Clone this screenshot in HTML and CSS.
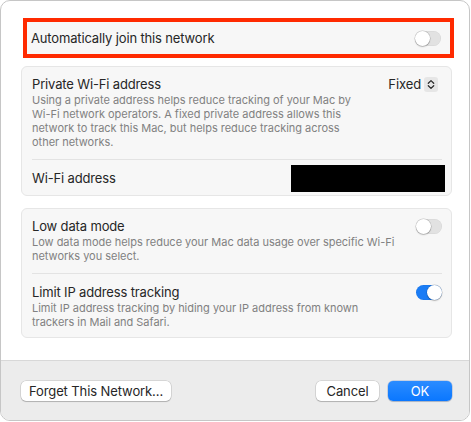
FILE: index.html
```html
<!DOCTYPE html>
<html>
<head>
<meta charset="utf-8">
<link rel="stylesheet" href="styles.css">
</head>
<body>
<div class="window">
  <div class="content">
    <div class="highlight">
      <span class="title">Automatically join this network</span>
      <span class="toggle"></span>
    </div>

    <div class="group">
      <div class="row">
        <div class="text narrow">
          <div class="title">Private Wi-Fi address</div>
          <div class="desc">Using a private address helps reduce tracking of your Mac by Wi-Fi network operators. A fixed private address allows this network to track this Mac, but helps reduce tracking across other networks.</div>
        </div>
        <div class="popup">
          <span>Fixed</span>
          <span class="stepper"><svg width="14" height="15" viewBox="0 0 14 15"><path d="M4.3 6.2 L7 3.6 L9.7 6.2 M4.3 8.8 L7 11.4 L9.7 8.8" fill="none" stroke="#2b2b2b" stroke-width="1.3" stroke-linecap="round" stroke-linejoin="round"/></svg></span>
        </div>
      </div>
      <div class="divider"></div>
      <div class="row single">
        <div class="title">Wi-Fi address</div>
        <div class="redact"></div>
      </div>
    </div>

    <div class="group group-b">
      <div class="row">
        <div class="text">
          <div class="title">Low data mode</div>
          <div class="desc">Low data mode helps reduce your Mac data usage over specific Wi-Fi networks you select.</div>
        </div>
        <span class="toggle"></span>
      </div>
      <div class="divider"></div>
      <div class="row last">
        <div class="text">
          <div class="title">Limit IP address tracking</div>
          <div class="desc">Limit IP address tracking by hiding your IP address from known trackers in Mail and Safari.</div>
        </div>
        <span class="toggle on"></span>
      </div>
    </div>
  </div>

  <div class="footer">
    <button class="btn forget">Forget This Network...</button>
    <div class="spacer"></div>
    <button class="btn cancel">Cancel</button>
    <button class="btn primary">OK</button>
  </div>
</div>
</body>
</html>
```

FILE: styles.css
```css
* { box-sizing: border-box; }
html, body { margin: 0; padding: 0; background: #ffffff; }
body {
  font-family: Inter, "Noto Sans", sans-serif;
  color: #262626;
  -webkit-font-smoothing: antialiased;
}
.window {
  width: 470px;
  height: 421px;
  border: 1px solid #c6c6c6;
  border-radius: 10px;
  background: #ffffff;
  overflow: hidden;
  display: flex;
  flex-direction: column;
}
.content {
  flex: 1;
  padding: 17px 17px 0 20px;
}
.highlight {
  margin-left: 2px;
  width: 431px;
  height: 40px;
  border: 4px solid #ff2a00;
  background: #f7f7f7;
  display: flex;
  align-items: center;
  justify-content: space-between;
  padding: 0 9px 0 4px;
}
.title {
  font-size: 13px;
  line-height: 16px;
  letter-spacing: -0.15px;
  color: #262626;
}
.desc {
  font-size: 11px;
  line-height: 14px;
  color: #818181;
  margin-top: 1px;
  letter-spacing: -0.02px;
}
.group {
  margin-top: 8px;
  background: #f7f7f7;
  border: 1px solid #e6e6e6;
  border-radius: 6px;
}
.group-b { margin-top: 12px; }
.row {
  display: flex;
  align-items: flex-start;
  justify-content: space-between;
  padding: 9px 9px 10px 10px;
}
.row.last { padding: 10px 9px 8px 10px; }
.row .text { width: 365px; }
.row .text.narrow { width: 322px; }
.row.single {
  height: 35px;
  align-items: center;
  padding: 0 6px 0 10px;
}
.divider {
  height: 1px;
  background: #e3e3e3;
  margin: 0 9px 0 10px;
}
.popup {
  display: flex;
  align-items: center;
  gap: 3px;
  font-size: 13px;
  line-height: 16px;
  letter-spacing: -0.1px;
  margin-right: 4px;
  margin-top: 0;
}
.stepper {
  width: 14px;
  height: 15px;
  border-radius: 3px;
  background: #e6e6e6;
  display: flex;
}
.redact {
  width: 154px;
  height: 27px;
  background: #000000;
  margin-top: 2px;
}
.toggle {
  position: relative;
  flex: none;
  width: 26px;
  height: 15px;
  border-radius: 8px;
  background: #e2e2e2;
  box-shadow: inset 0 0 0 0.5px rgba(0,0,0,0.06);
  margin-top: 1px;
}
.highlight .toggle { margin-top: 0; }
.toggle::after {
  content: "";
  position: absolute;
  left: 0;
  top: 0;
  width: 15px;
  height: 15px;
  border-radius: 50%;
  background: #ffffff;
  box-shadow: 0 0 0 0.5px rgba(0,0,0,0.2), 0 1px 1.5px rgba(0,0,0,0.2);
}
.toggle.on { background: #1a7cf5; }
.toggle.on::after { left: 11px; }
.footer {
  height: 60px;
  background: #ececec;
  border-top: 1px solid #d8d8d8;
  display: flex;
  align-items: flex-start;
  padding: 20px 17px 0 20px;
  gap: 9px;
}
.spacer { flex: 1; }
.btn {
  font-family: Inter, "Noto Sans", sans-serif;
  font-size: 13px;
  letter-spacing: -0.1px;
  color: #262626;
  height: 20px;
  line-height: 20px;
  padding: 0;
  white-space: nowrap;
  text-align: center;
  border: none;
  border-radius: 5px;
  background: #ffffff;
  box-shadow: 0 0 0 0.5px rgba(0,0,0,0.18), 0 1px 1px rgba(0,0,0,0.18);
}
.forget { width: 150px; }
.cancel { width: 63px; }
.primary {
  width: 64px;
  color: #ffffff;
  background: linear-gradient(#2b8cff, #0a77ff);
  box-shadow: 0 0 0 0.5px rgba(0,60,160,0.3), 0 1px 1px rgba(0,0,0,0.15);
}
```
